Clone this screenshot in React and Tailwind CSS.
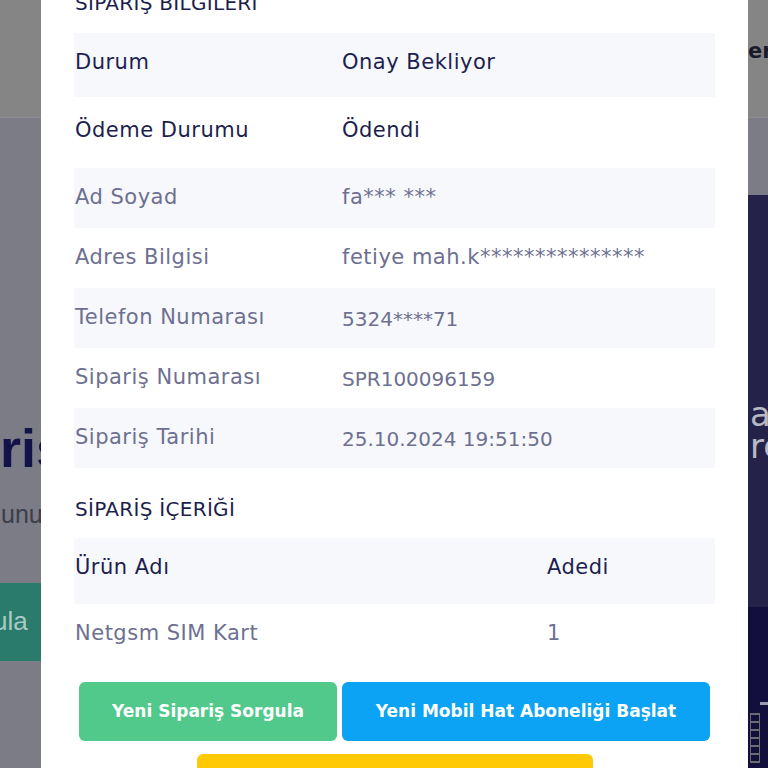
import React from "react";

const FONT = { fontFamily: '"DejaVu Sans", "Noto Sans", sans-serif' };
const HERO_FONT = { fontFamily: '"Liberation Sans", Arial, sans-serif' };

const orderInfo = [
  { label: "Durum", value: "Onay Bekliyor", strong: true, h: "h-[64px] pb-[5px]", striped: true },
  { label: "Ödeme Durumu", value: "Ödendi", strong: true, h: "h-[71px] pb-[4px]", striped: false },
  { label: "Ad Soyad", value: "fa*** ***", h: "h-[60px]", striped: true },
  { label: "Adres Bilgisi", value: "fetiye mah.k***************", h: "h-[60px]", striped: false },
  { label: "Telefon Numarası", value: "5324****71", numeric: true, h: "h-[60px]", striped: true },
  { label: "Sipariş Numarası", value: "SPR100096159", numeric: true, h: "h-[60px]", striped: false },
  { label: "Sipariş Tarihi", value: "25.10.2024 19:51:50", numeric: true, h: "h-[60px]", striped: true },
];

function InfoRow({ row }) {
  const color = row.strong ? "text-[#1d1f4e]" : "text-[#6d7090]";
  return (
    <div
      className={`flex items-center ${row.h} pl-[1px] ${color} ${
        row.striped ? "bg-[#f7f8fc]" : "bg-white"
      }`}
    >
      <div className="w-[267px] shrink-0 whitespace-nowrap text-[21px] tracking-[0.5px]">
        {row.label}
      </div>
      <div
        className={
          row.numeric
            ? "whitespace-nowrap pt-[1px] text-[20px]"
            : "whitespace-nowrap text-[21px] tracking-[0.5px]"
        }
      >
        {row.value}
      </div>
    </div>
  );
}

function BackgroundPage() {
  return (
    <div className="flex h-full flex-col">
      <header className="flex h-[118px] shrink-0 justify-end border-b border-[#8d8d8f] bg-[#858585]">
        <div className="w-[20px] overflow-visible whitespace-nowrap pt-[36px] text-[21px] font-bold text-[#1a1a2e]">
          er
        </div>
      </header>

      <div className="flex flex-1 bg-[#7b7c86]">
        <div className="flex flex-1 flex-col pt-[300px]" style={HERO_FONT}>
          <div className="whitespace-nowrap text-[54px] font-bold leading-[60px] text-[#13134a]">
            riş Sorgulama
          </div>
          <div className="mt-[18px] whitespace-nowrap pl-[1px] text-[25px] text-[#3d3e4a]">
            unuzu girin
          </div>
          <div className="mt-[49px] -ml-[80px] flex h-[78px] w-[260px] items-center whitespace-nowrap bg-[#2a7b6c] pl-[18px] text-[26px] text-[#a8cbc3]">
            Sorgula
          </div>
        </div>

        <div className="flex w-[20px] shrink-0 flex-col pt-[77px]">
          <div className="h-[412px] whitespace-nowrap bg-[#242249] pt-[203px] pl-[2px] text-[34px] leading-[32px] text-[#b9b9c4]">
            <div>ar</div>
            <div>re</div>
          </div>
          <div className="flex-1 bg-[#120f3c] pt-[95px]">
            <div className="ml-[12px] h-[3px] w-[10px] bg-[#9a9ab0]" />
            <div className="mt-[8px] ml-[2px] h-[50px] w-[10px] border-x border-[#6a6a70] bg-[repeating-linear-gradient(#6a6a70_0_2px,transparent_2px_8px)]" />
          </div>
        </div>
      </div>
    </div>
  );
}

function OrderModal() {
  return (
    <div className="absolute bottom-0 left-[41px] top-0 w-[707px] overflow-hidden bg-white px-[33px]">
      <div className="-mt-[12px]">
        <h3 className="h-[30px] whitespace-nowrap pl-[1px] text-[20px] leading-[30px] tracking-[0.3px] text-[#1d1f4e]">
          SİPARİŞ BİLGİLERİ
        </h3>

        <div className="mt-[15px]">
          {orderInfo.map((row) => (
            <InfoRow key={row.label} row={row} />
          ))}
        </div>

        <h3 className="mt-[26px] h-[30px] whitespace-nowrap pl-[1px] text-[20px] leading-[30px] tracking-[0.3px] text-[#1d1f4e]">
          SİPARİŞ İÇERİĞİ
        </h3>

        <div className="mt-[14px]">
          <div className="flex h-[66px] items-center bg-[#f7f8fc] pb-[7px] pl-[1px] text-[21px] tracking-[0.5px] text-[#1d1f4e]">
            <div className="w-[472px] shrink-0">Ürün Adı</div>
            <div>Adedi</div>
          </div>
          <div className="flex h-[60px] items-center pl-[1px] text-[21px] tracking-[0.5px] text-[#6d7090]">
            <div className="w-[472px] shrink-0">Netgsm SIM Kart</div>
            <div>1</div>
          </div>
        </div>

        <div className="mt-[18px] flex gap-[5px] px-[5px]">
          <button
            type="button"
            className="flex h-[59px] w-[258px] shrink-0 items-center justify-center rounded-[6px] bg-[#50c98b] text-[17px] font-bold text-white"
          >
            Yeni Sipariş Sorgula
          </button>
          <button
            type="button"
            className="flex h-[59px] flex-1 items-center justify-center rounded-[6px] bg-[#0ca3f4] text-[17px] font-bold text-white"
          >
            Yeni Mobil Hat Aboneliği Başlat
          </button>
        </div>

        <div className="mt-[13px] flex justify-center">
          <button
            type="button"
            className="h-[59px] w-[396px] rounded-[6px] bg-[#ffca05] text-[17px] font-bold text-white"
          >
            Ana Sayfaya Dön
          </button>
        </div>
      </div>
    </div>
  );
}

export default function App() {
  return (
    <div className="relative h-[768px] w-full overflow-hidden" style={FONT}>
      <BackgroundPage />
      <OrderModal />
    </div>
  );
}
